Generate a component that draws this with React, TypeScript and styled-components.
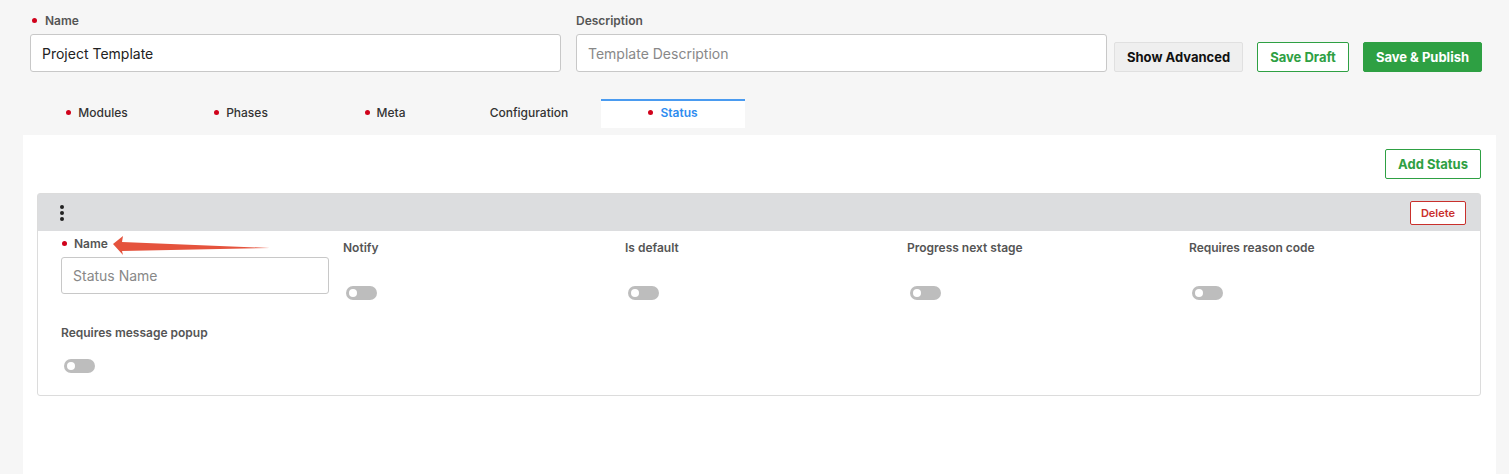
import React from "react";
import styled, { createGlobalStyle } from "styled-components";

const GlobalStyle = createGlobalStyle`
  html, body {
    margin: 0;
    padding: 0;
    background: #f6f6f6;
    font-family: Inter, "Noto Sans", sans-serif;
  }
  * { box-sizing: border-box; }
`;

const Page = styled.div`
  width: 1509px;
  height: 474px;
  background: #f6f6f6;
  overflow: hidden;
  display: flex;
  flex-direction: column;
`;

const TopBar = styled.div`
  display: flex;
  align-items: flex-end;
  padding: 13px 0 0 30px;
`;

const Field = styled.div<{ width: number }>`
  display: flex;
  flex-direction: column;
  width: ${({ width }) => width}px;
  margin-right: 15px;
`;

const Label = styled.label`
  display: flex;
  align-items: center;
  font-size: 12px;
  font-weight: 600;
  color: #555;
  height: 14px;
  margin-bottom: 7px;
`;

const Dot = styled.span`
  width: 5px;
  height: 5px;
  border-radius: 50%;
  background: #d0021b;
  margin: 0 8px 0 2px;
`;

const TextInput = styled.input`
  height: 38px;
  width: 100%;
  border: 1px solid #c8c8c8;
  border-radius: 3px;
  padding: 0 11px;
  font-family: Inter, "Noto Sans", sans-serif;
  font-size: 14px;
  color: #222;
  background: #fff;
  outline: none;
  &::placeholder { color: #888; }
`;

const Actions = styled.div`
  display: flex;
  gap: 14px;
  margin-left: -8px;
`;

const Button = styled.button<{ variant: "gray" | "outline" | "solid" | "danger" }>`
  height: 30px;
  padding: 0 12px;
  border-radius: 2px;
  font-family: Inter, "Noto Sans", sans-serif;
  font-size: 13px;
  font-weight: 700;
  cursor: pointer;
  border: 1px solid
    ${({ variant }) =>
      variant === "gray" ? "#e0e0e0" : variant === "danger" ? "#c9302c" : "#2ea043"};
  background: ${({ variant }) =>
    variant === "gray" ? "#efefef" : variant === "solid" ? "#2ea043" : "#fff"};
  color: ${({ variant }) =>
    variant === "gray"
      ? "#111"
      : variant === "solid"
      ? "#fff"
      : variant === "danger"
      ? "#c9302c"
      : "#2ea043"};
`;

const Tabs = styled.div`
  display: flex;
  margin: 27px 0 0 25px;
  height: 36px;
`;

const Tab = styled.div<{ active?: boolean }>`
  width: 144px;
  height: 29px;
  padding-bottom: 4px;
  display: flex;
  align-items: center;
  justify-content: center;
  font-size: 12px;
  font-weight: ${({ active }) => (active ? 600 : 500)};
  color: ${({ active }) => (active ? "#2d8cf0" : "#333")};
  background: ${({ active }) => (active ? "#fff" : "transparent")};
  border-top: 2px solid ${({ active }) => (active ? "#4a9bf0" : "transparent")};
  ${Dot} { margin: 0 7px 0 0; }
`;

const Panel = styled.div`
  flex: 1;
  margin: 0 13px 0 23px;
  background: #fff;
  padding: 14px 15px 0 14px;
  display: flex;
  flex-direction: column;
`;

const PanelHead = styled.div`
  display: flex;
  justify-content: flex-end;
  margin-bottom: 14px;
`;

const Card = styled.div`
  position: relative;
  border: 1px solid #dcdcdc;
  border-radius: 3px;
  height: 203px;
`;

const CardHeader = styled.div`
  height: 37px;
  background: #dcdddf;
  display: flex;
  align-items: center;
  justify-content: space-between;
  padding: 0 14px 0 22px;
`;

const Kebab = styled.span`
  display: flex;
  flex-direction: column;
  gap: 2px;
  & > i {
    width: 4px;
    height: 4px;
    border-radius: 50%;
    background: #222;
  }
`;

const SmallButton = styled(Button)`
  height: 24px;
  padding: 0 10px;
  font-size: 11px;
  font-weight: 600;
`;

const CardBody = styled.div`
  display: grid;
  grid-template-columns: repeat(5, 282px);
  row-gap: 25px;
  padding: 5px 0 0 23px;
`;

const Cell = styled.div`
  display: flex;
  flex-direction: column;
`;

const CellLabel = styled.div<{ top?: number }>`
  display: flex;
  align-items: center;
  font-size: 12px;
  font-weight: 600;
  color: #555;
  height: 14px;
  margin-top: ${({ top }) => top ?? 0}px;
  ${Dot} { margin: 0 7px 0 1px; }
`;

const Toggle = styled.span<{ top: number }>`
  margin: ${({ top }) => top}px 0 0 3px;
  width: 31px;
  height: 14px;
  border-radius: 7px;
  background: #bdbdbd;
  position: relative;
  &::after {
    content: "";
    position: absolute;
    left: 3px;
    top: 3px;
    width: 8px;
    height: 8px;
    border-radius: 50%;
    background: #fff;
  }
`;

const NameInput = styled(TextInput)`
  width: 268px;
  height: 37px;
  margin-top: 7px;
`;

const Arrow = styled.svg`
  position: absolute;
  left: 74px;
  top: 42px;
`;

const toggles = ["Notify", "Is default", "Progress next stage", "Requires reason code"];

export default function App() {
  return (
    <Page>
      <GlobalStyle />
      <TopBar>
        <Field width={531}>
          <Label>
            <Dot />
            Name
          </Label>
          <TextInput defaultValue="Project Template" />
        </Field>
        <Field width={531}>
          <Label>Description</Label>
          <TextInput placeholder="Template Description" />
        </Field>
        <Actions>
          <Button variant="gray">Show Advanced</Button>
          <Button variant="outline">Save Draft</Button>
          <Button variant="solid">Save &amp; Publish</Button>
        </Actions>
      </TopBar>

      <Tabs>
        <Tab>
          <Dot />
          Modules
        </Tab>
        <Tab>
          <Dot />
          Phases
        </Tab>
        <Tab>
          <Dot />
          Meta
        </Tab>
        <Tab>Configuration</Tab>
        <Tab active>
          <Dot />
          Status
        </Tab>
      </Tabs>

      <Panel>
        <PanelHead>
          <Button variant="outline">Add Status</Button>
        </PanelHead>
        <Card>
          <CardHeader>
            <Kebab>
              <i />
              <i />
              <i />
            </Kebab>
            <SmallButton variant="danger">Delete</SmallButton>
          </CardHeader>
          <CardBody>
            <Cell>
              <CellLabel>
                <Dot />
                Name
              </CellLabel>
              <NameInput placeholder="Status Name" />
            </Cell>
            {toggles.map((t) => (
              <Cell key={t}>
                <CellLabel top={4}>{t}</CellLabel>
                <Toggle top={32} />
              </Cell>
            ))}
            <Cell>
              <CellLabel>Requires message popup</CellLabel>
              <Toggle top={20} />
            </Cell>
          </CardBody>
          <Arrow width="160" height="20" viewBox="0 0 160 20">
            <polygon points="1,8 11,0 10,6 158,12 10,15 11,19" fill="#e5533d" />
          </Arrow>
        </Card>
      </Panel>
    </Page>
  );
}
